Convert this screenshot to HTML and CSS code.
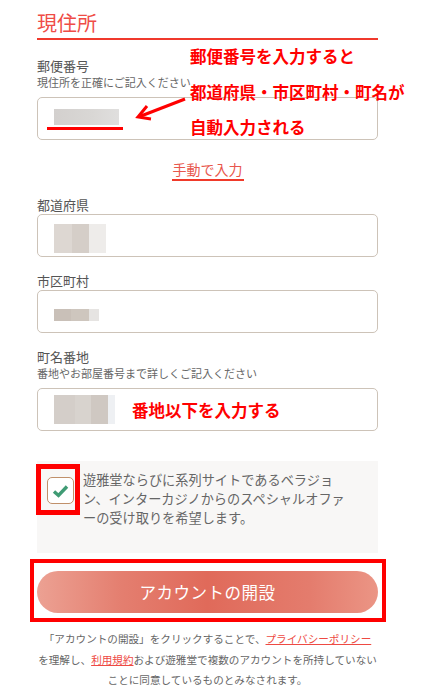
FILE: index.html
```html
<!DOCTYPE html>
<html lang="ja">
<head>
  <meta charset="UTF-8">
  <meta name="viewport" content="width=device-width, initial-scale=1.0"/>
  <title>現住所</title>
  <link rel="stylesheet" href="styles.css">
</head>
<body>
  <main class="address">
    <!-- Section title -->
    <h2 class="section-title">現住所</h2>

    <!-- Postal code -->
    <div class="field field-first">
      <label class="field-label">郵便番号</label>
      <div class="field-note">現住所を正確にご記入ください</div>
      <div class="input">
        <span class="blur blur-zip"></span>
        <span class="mark-line"></span>
      </div>
      <!-- annotation -->
      <div class="note-zip">
        <p>郵便番号を入力すると</p>
        <p>都道府県・市区町村・町名が</p>
        <p>自動入力される</p>
      </div>
      <svg class="note-arrow" width="52" height="24" viewBox="0 0 52 24">
        <line x1="50" y1="2" x2="6" y2="19" stroke="#ff0000" stroke-width="3"/>
        <polyline points="12,9 3,20 16,22" fill="none" stroke="#ff0000" stroke-width="3"/>
      </svg>
    </div>

    <div class="manual"><a href="#">手動で入力</a></div>

    <div class="field">
      <label class="field-label">都道府県</label>
      <div class="input"><span class="blur blur-pref"></span></div>
    </div>

    <div class="field">
      <label class="field-label">市区町村</label>
      <div class="input"><span class="blur blur-city"></span></div>
    </div>

    <div class="field">
      <label class="field-label">町名番地</label>
      <div class="field-note">番地やお部屋番号まで詳しくご記入ください</div>
      <div class="input">
        <span class="blur blur-street"></span>
        <span class="note-street">番地以下を入力する</span>
      </div>
    </div>

    <!-- Offer opt-in -->
    <div class="optin">
      <div class="check-wrap">
        <span class="check">
          <svg width="17" height="14" viewBox="0 0 17 14">
            <polyline points="2,7.5 6.5,11.5 15,2.5" fill="none" stroke="#3f9b74" stroke-width="3.4"/>
          </svg>
        </span>
        <span class="highlight hl-check"></span>
      </div>
      <p class="optin-text">遊雅堂ならびに系列サイトであるベラジョ<br>ン、インターカジノからのスペシャルオファ<br>ーの受け取りを希望します。</p>
    </div>

    <div class="submit-wrap">
      <button class="btn-submit" type="button">アカウントの開設</button>
      <span class="highlight hl-btn"></span>
    </div>

    <p class="terms">「アカウントの開設」をクリックすることで、<a href="#">プライバシーポリシー</a><br>を理解し、<a href="#">利用規約</a>および遊雅堂で複数のアカウントを所持していない<br>ことに同意しているものとみなされます。</p>
  </main>
</body>
</html>
```

FILE: styles.css
```css
/* --- Vars and reset --- */
:root {
  --accent: #ef4c46;
  --note: #ff0000;
  --text: #585858;
  --border: #cdc3b8;
  --font: "Noto Sans CJK JP", "Noto Sans", sans-serif;
}
* { box-sizing: border-box; margin: 0; padding: 0; }
body { font-family: var(--font); background: #fff; color: var(--text); }

.address { width: 341px; margin-left: 37px; padding-top: 8px; }

/* --- Title --- */
.section-title {
  font-size: 20px;
  font-weight: normal;
  line-height: 30px;
  color: var(--accent);
  border-bottom: 2px solid #f0392c;
}

/* --- Fields --- */
.field { position: relative; margin-top: 15px; }
.field-first { margin-top: 17px; }
.field-label { display: block; font-size: 13px; line-height: 18px; color: #555; }
.field-note { font-size: 11px; line-height: 14px; color: #666; margin-bottom: 8px; }
.input {
  position: relative;
  display: flex;
  align-items: center;
  height: 43px;
  border: 1px solid var(--border);
  border-radius: 5px;
  padding-left: 16px;
  background: #fff;
}
.blur { display: block; background: linear-gradient(90deg, #cdc6c1, #d6d0cb 70%, #ecebea); }
.blur-zip { width: 65px; height: 16px; margin-top: -4px; background: linear-gradient(90deg, #d3d0ce, #d9d7d5 60%, #e0dfde); }
.blur-pref { width: 52px; height: 29px; margin-top: 6px; background: linear-gradient(90deg, #ddd7d2 0 35%, #d5cec8 35% 68%, #eeecea 68%); }
.blur-city { width: 45px; height: 12px; margin-top: 6px; background: linear-gradient(90deg, #c9c0b8 0 38%, #cec6be 38% 78%, #e6e4e2 78%); }
.blur-street { width: 61px; height: 29px; background: linear-gradient(90deg, #d4cec9 0 35%, #d8d3ce 35% 60%, #cfc8c2 60% 88%, #eef0f3 88%); }

.mark-line {
  position: absolute;
  left: 9px;
  top: 29px;
  width: 76px;
  height: 3px;
  background: var(--note);
}

/* --- Annotations --- */
.note-zip {
  position: absolute;
  left: 153px;
  top: -18px;
  color: var(--note);
  font-size: 16.5px;
  font-weight: bold;
  line-height: 35.5px;
  white-space: nowrap;
}
.note-arrow { position: absolute; left: 98px; top: 40px; }
.note-street {
  margin-left: 17px;
  color: var(--note);
  font-size: 16.5px;
  font-weight: bold;
}

/* --- Manual link --- */
.manual { text-align: center; margin-top: 16px; }
.manual a {
  display: inline-block;
  font-size: 14px;
  line-height: 20px;
  color: #e8574d;
  text-decoration: none;
  border-bottom: 2px solid #f03a2a;
  padding: 0 1px;
}

/* --- Opt-in --- */
.optin {
  display: flex;
  gap: 9px;
  margin-top: 30px;
  height: 92px;
  background: #f8f7f6;
  padding: 9px 0 0 10px;
}
.check-wrap { position: relative; margin-top: 7px; align-self: flex-start; }
.check {
  display: flex;
  align-items: center;
  justify-content: center;
  width: 27px;
  height: 27px;
  border: 1.5px solid #c0906a;
  border-radius: 5px;
  background: #fff;
}
.optin-text { font-size: 13.2px; line-height: 19px; color: #666; white-space: nowrap; }

.highlight { position: absolute; border: 4px solid var(--note); pointer-events: none; }
.hl-check { left: -11px; top: -13px; right: -6px; bottom: -11px; border-width: 5px; }

/* --- Submit --- */
.submit-wrap { position: relative; margin-top: 18px; }
.btn-submit {
  display: block;
  width: 100%;
  height: 42px;
  border: none;
  border-radius: 21px;
  background: linear-gradient(90deg, #eca193 0%, #e47e6f 25%, #e06a5a 50%, #e47c6d 80%, #eb9585 100%);
  color: #fff;
  font-family: var(--font);
  font-size: 16.5px;
  letter-spacing: 0.5px;
}
.hl-btn { left: -7px; top: -12px; right: -8px; bottom: -9px; }

/* --- Terms --- */
.terms {
  margin: 16px -6px 0;
  text-align: center;
  font-size: 10.6px;
  line-height: 20.5px;
  color: #666;
  white-space: nowrap;
}
.terms a { color: #ee4a43; }
```
